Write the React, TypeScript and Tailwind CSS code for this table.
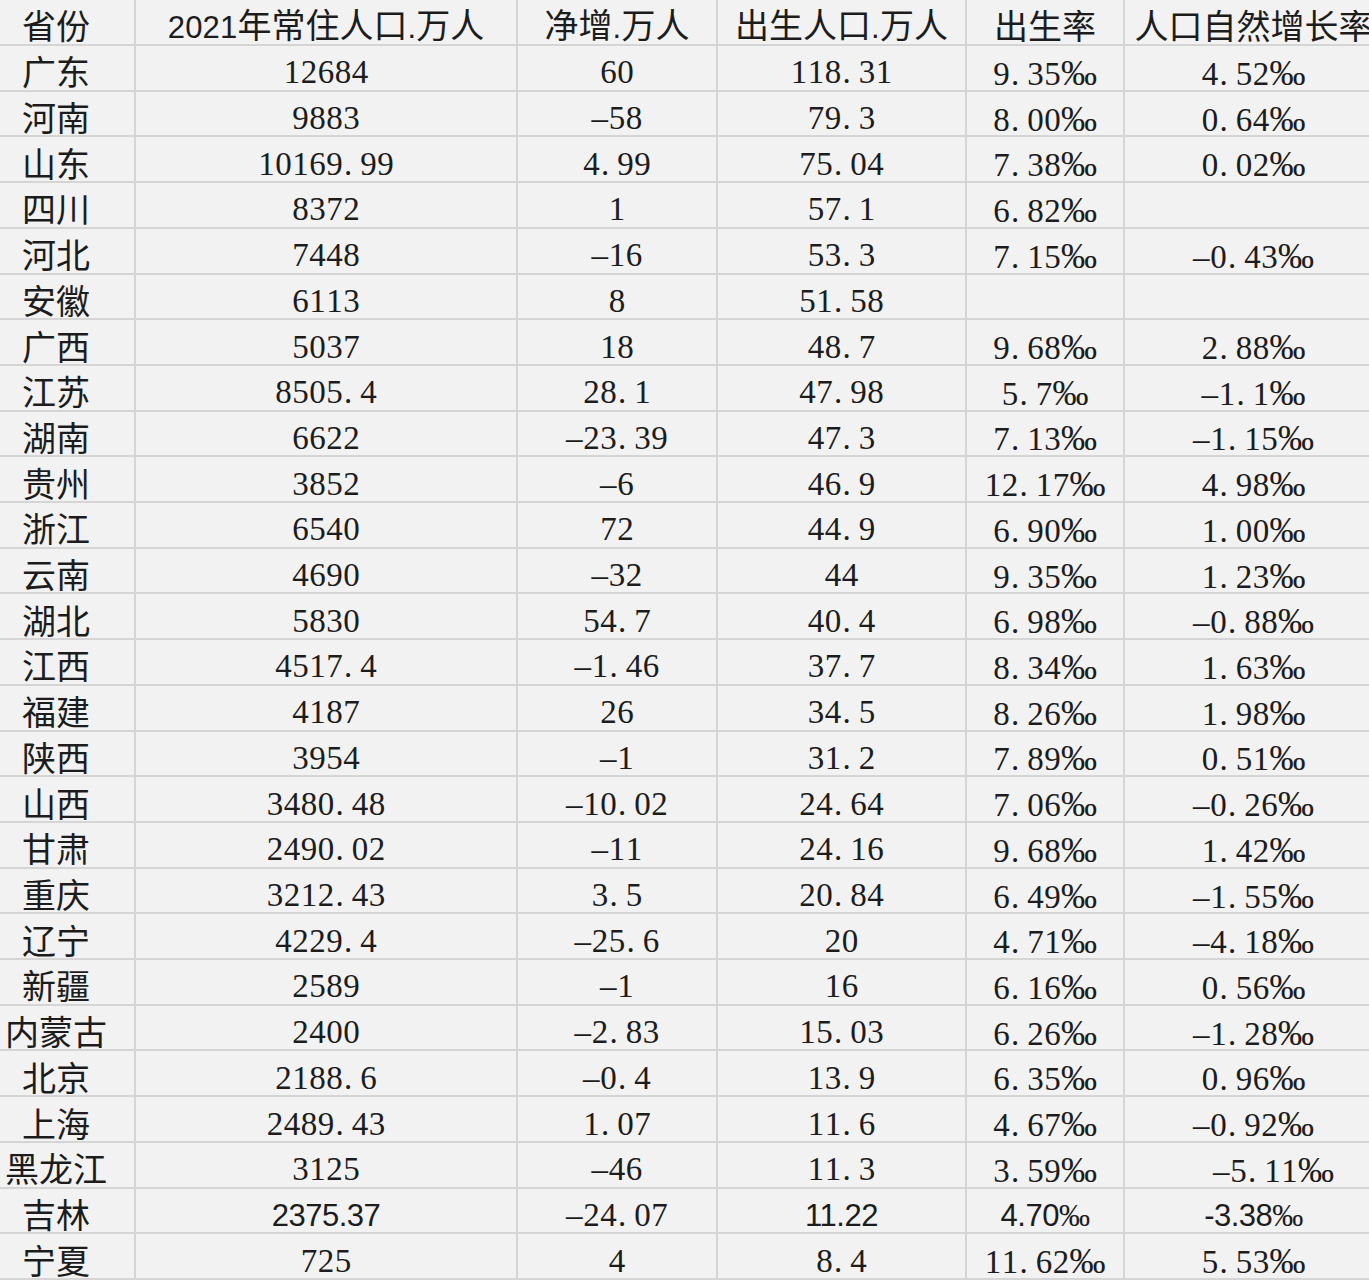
import React from "react";

type Row = [string, string, string, string, string, string];

const rows: Row[] = [
  ["广东", "12684", "60", "118.31", "9.35‰", "4.52‰"],
  ["河南", "9883", "-58", "79.3", "8.00‰", "0.64‰"],
  ["山东", "10169.99", "4.99", "75.04", "7.38‰", "0.02‰"],
  ["四川", "8372", "1", "57.1", "6.82‰", ""],
  ["河北", "7448", "-16", "53.3", "7.15‰", "-0.43‰"],
  ["安徽", "6113", "8", "51.58", "", ""],
  ["广西", "5037", "18", "48.7", "9.68‰", "2.88‰"],
  ["江苏", "8505.4", "28.1", "47.98", "5.7‰", "-1.1‰"],
  ["湖南", "6622", "-23.39", "47.3", "7.13‰", "-1.15‰"],
  ["贵州", "3852", "-6", "46.9", "12.17‰", "4.98‰"],
  ["浙江", "6540", "72", "44.9", "6.90‰", "1.00‰"],
  ["云南", "4690", "-32", "44", "9.35‰", "1.23‰"],
  ["湖北", "5830", "54.7", "40.4", "6.98‰", "-0.88‰"],
  ["江西", "4517.4", "-1.46", "37.7", "8.34‰", "1.63‰"],
  ["福建", "4187", "26", "34.5", "8.26‰", "1.98‰"],
  ["陕西", "3954", "-1", "31.2", "7.89‰", "0.51‰"],
  ["山西", "3480.48", "-10.02", "24.64", "7.06‰", "-0.26‰"],
  ["甘肃", "2490.02", "-11", "24.16", "9.68‰", "1.42‰"],
  ["重庆", "3212.43", "3.5", "20.84", "6.49‰", "-1.55‰"],
  ["辽宁", "4229.4", "-25.6", "20", "4.71‰", "-4.18‰"],
  ["新疆", "2589", "-1", "16", "6.16‰", "0.56‰"],
  ["内蒙古", "2400", "-2.83", "15.03", "6.26‰", "-1.28‰"],
  ["北京", "2188.6", "-0.4", "13.9", "6.35‰", "0.96‰"],
  ["上海", "2489.43", "1.07", "11.6", "4.67‰", "-0.92‰"],
  ["黑龙江", "3125", "-46", "11.3", "3.59‰", "-5.11‰"],
  ["吉林", "2375.37", "-24.07", "11.22", "4.70‰", "-3.38‰"],
  ["宁夏", "725", "4", "8.4", "11.62‰", "5.53‰"],
];

function Num({ v, prop }: { v: string; prop?: boolean }) {
  if (!v) return null;
  const permil = v.endsWith("‰");
  const base = permil ? v.slice(0, -1) : v;
  if (prop) {
    return (
      <span className="whitespace-nowrap font-['Liberation_Sans',sans-serif] text-[31px] tracking-[-0.5px] leading-none">
        {base}
        {permil && (
          <span className="font-['Liberation_Serif',serif] text-[31px]">‰</span>
        )}
      </span>
    );
  }
  return (
    <span className="whitespace-nowrap font-['Liberation_Serif',serif] text-[33px] leading-none">
      {base.split("").map((c, i) =>
        c === "-" ? (
          <span key={i} className="inline-block w-[17px] text-left">
            –
          </span>
        ) : (
          <span
            key={i}
            className={`inline-block w-[17px] ${c === "." ? "text-left pl-[1px]" : "text-center"}`}
          >
            {c}
          </span>
        )
      )}
      {permil && (
        <span className="font-['Liberation_Serif',serif] text-[36px]">‰</span>
      )}
    </span>
  );
}

function Mixed({ text }: { text: string }) {
  const parts = text.match(/[\x00-\x7f]+|[^\x00-\x7f]+/g) || [];
  return (
    <span className="whitespace-nowrap leading-none">
      {parts.map((p, i) =>
        /^[\x00-\x7f]+$/.test(p) ? (
          <span
            key={i}
            className="font-['Liberation_Sans',sans-serif] text-[31px] tracking-[0.2px]"
          >
            {p}
          </span>
        ) : (
          <span
            key={i}
            className="font-['Noto_Sans_CJK_SC',sans-serif] text-[34px]"
          >
            {p}
          </span>
        )
      )}
    </span>
  );
}

const cellBase =
  "flex items-center justify-center border-r-2 border-b-2 border-[#d5d5d5] leading-none text-[#1c1c1c]";

export default function App() {
  const header = ["省份", "2021年常住人口.万人", "净增.万人", "出生人口.万人", "出生率", "人口自然增长率"];
  return (
    <div className="w-[1369px] h-[1280px] overflow-hidden bg-[#f2f2f2]">
      <div className="grid w-[1384px] h-[1280px] grid-cols-[136px_382px_200px_249px_158px_259px] grid-rows-[46px_repeat(27,minmax(0,1fr))]">
        {header.map((h, i) => (
          <div
            key={i}
            className={`${cellBase} pt-[6px] ${i === 0 ? "pr-[22px]" : ""}`}
          >
            <Mixed text={h} />
          </div>
        ))}
        {rows.map((r, ri) => {
          const jilin = r[0] === "吉林";
          return (
            <React.Fragment key={ri}>
              <div className={`${cellBase} pr-[22px] pt-[7px]`}>
                <span className="whitespace-nowrap font-['Noto_Sans_CJK_SC',sans-serif] text-[34px] leading-none">
                  {r[0]}
                </span>
              </div>
              <div className={`${cellBase} pt-[10px]`}>
                <Num v={r[1]} prop={jilin} />
              </div>
              <div className={`${cellBase} pt-[10px]`}>
                <Num v={r[2]} />
              </div>
              <div className={`${cellBase} pt-[10px]`}>
                <Num v={r[3]} prop={jilin} />
              </div>
              <div className={`${cellBase} pt-[10px]`}>
                <Num v={r[4]} prop={jilin} />
              </div>
              <div
                className={`${cellBase} pt-[10px] ${r[0] === "黑龙江" ? "pl-[40px]" : ""}`}
              >
                <Num v={r[5]} prop={jilin} />
              </div>
            </React.Fragment>
          );
        })}
      </div>
    </div>
  );
}
